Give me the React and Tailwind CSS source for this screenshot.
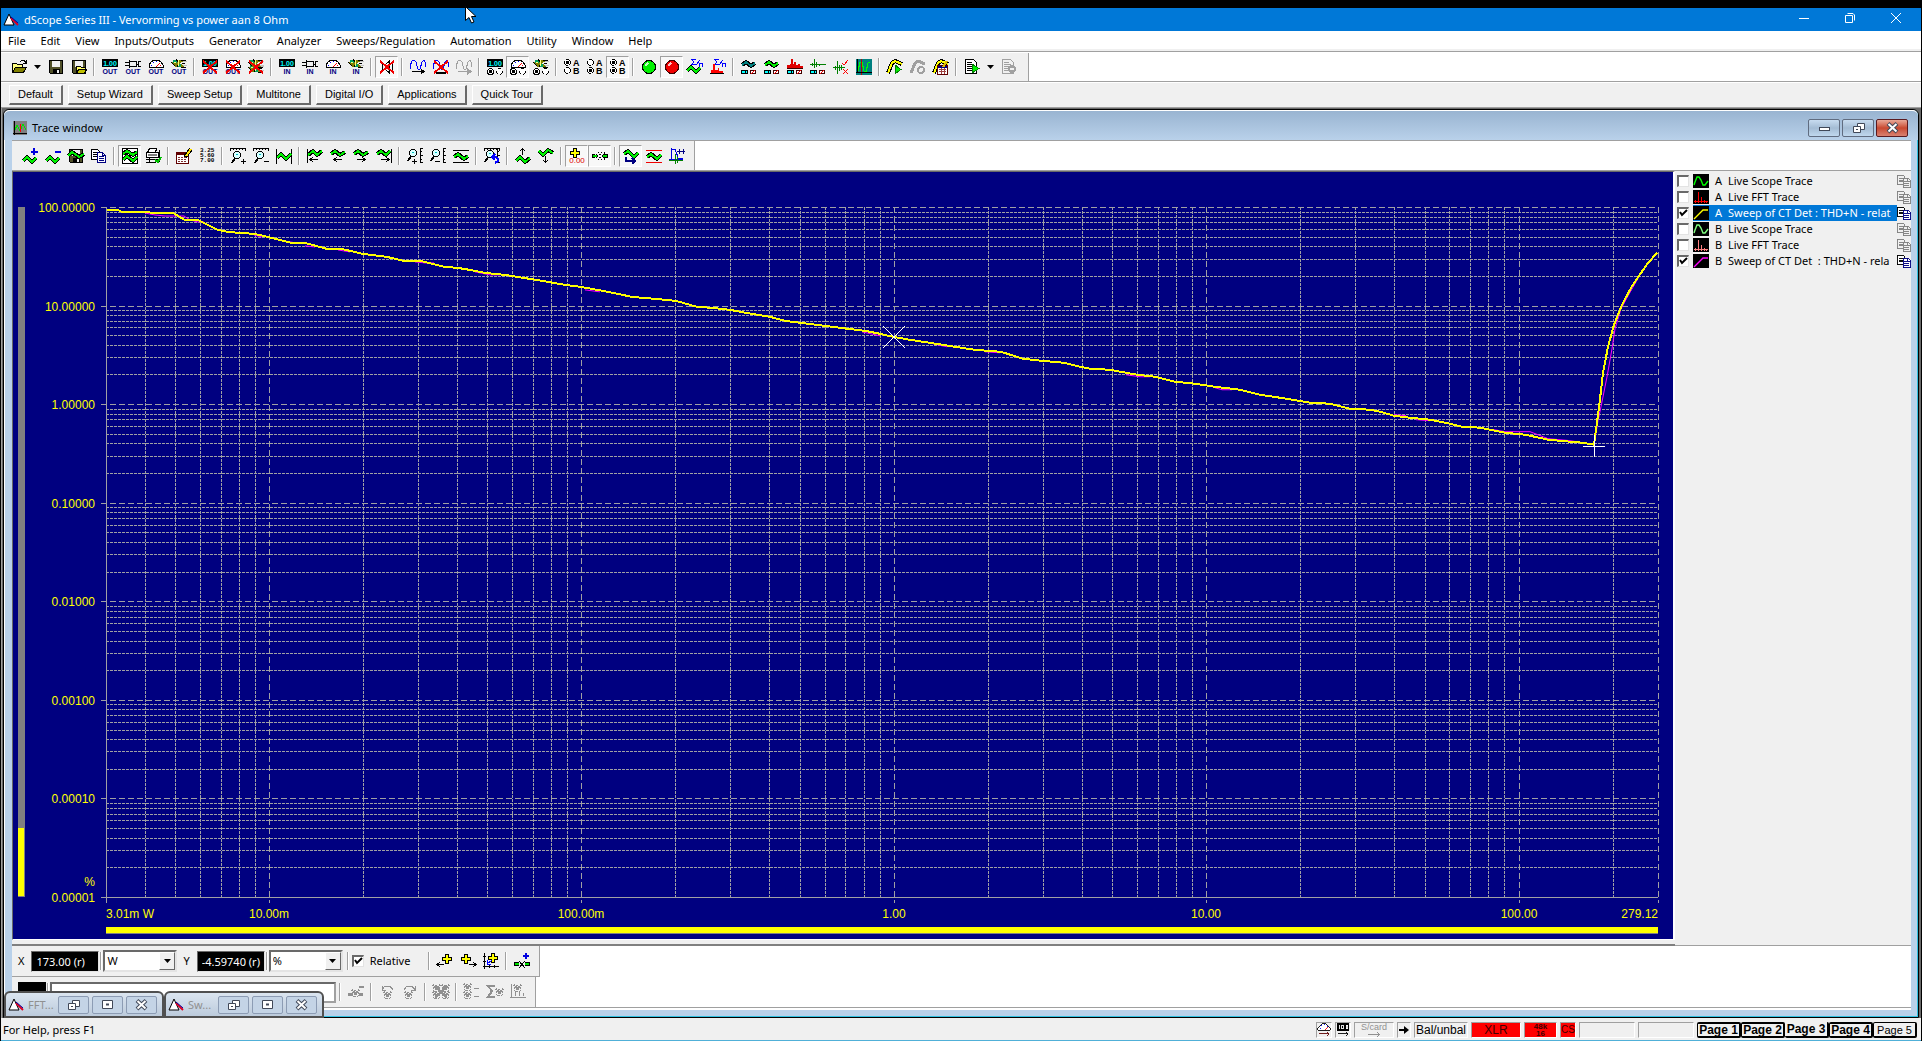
import React, { useEffect, useRef, useState } from 'react';

/* ---------- icon parts ---------- */

const Wave = ({ d = 'M1 10 L5 6 L11 11 L15 7', color = '#00f000' }) => (
  <>
    <path d={d} fill="none" stroke="#000" strokeWidth="4" />
    <path d={d} fill="none" stroke={color} strokeWidth="2" />
  </>
);

const Caption = ({ children }) => (
  <text x="8" y="15" fontSize="7" fontWeight="bold" textAnchor="middle" fill="#000080">{children}</text>
);

const Lcd = () => (
  <>
    <rect x="0" y="0" width="16" height="8" fill="#000" />
    <text x="8" y="7" fontSize="7" fontWeight="bold" textAnchor="middle" fill="#00ffff">1.00</text>
  </>
);

const Plug = () => (
  <path d="M0 3.5h4M0 6.5h4M4.5 1v8M4.5 2.5h7v5h-7M11.5 5h2M13.5 2.5h2.5M13.5 7.5h2.5M13.5 2v6" fill="none" stroke="#000" />
);

const Meter = () => (
  <>
    <path d="M1 8.5 V6 L3 3 L6 1 H10 L13 3 L15 6 V8.5 Z" fill="#fff" stroke="#000" />
    <path d="M3 6h1M5 3h1M8 2h1M11 4h1" stroke="#00f" />
    <path d="M8 8 L12 4" stroke="#f00" />
    <path d="M12 6h1" stroke="#f00" />
  </>
);

const Tiger = () => (
  <>
    <path d="M0 4 L3 1 H13 V3 H10 L9 5 L13 6 V8 H4 Z" fill="#808000" />
    <path d="M2 1 h4 v3 h-4z M7 5h3v3h-3z" fill="#00a060" />
    <path d="M5 0 L8 4 L6 8 M0 3 L4 7 M10 1 h5 M11 4 h3 M10 8 h5" fill="none" stroke="#000" />
    <path d="M7 1 v6 M3 3 h2" stroke="#ffff80" />
    <path d="M12 2.5h4M12 6h4" stroke="#c0c0c0" />
  </>
);

const Cross = () => (
  <path d="M1 2 L15 14 M15 2 L1 14" fill="none" stroke="#f00000" strokeWidth="2" />
);

const Radios = () => (
  <>
    <circle cx="3.5" cy="12.5" r="3" fill="#fff" stroke="#000" />
    <circle cx="12.5" cy="12.5" r="3" fill="#fff" stroke="#000" strokeDasharray="4 2" />
    <rect x="2" y="11" width="3" height="3" />
  </>
);

const Pads = () => (
  <>
    <rect x="0.5" y="11.5" width="6" height="3" fill="#00ffff" stroke="#000" />
    <path d="M4.5 11v4" stroke="#000" />
    <rect x="9.5" y="11.5" width="5" height="3" fill="#fff" stroke="#400000" />
    <path d="M10 15 L14 11" stroke="#f00" />
  </>
);

const Ab = ({ a, b }) => (
  <>
    <circle cx="3.5" cy="3.5" r="3" fill="#fff" stroke="#000" strokeDasharray="3 1" />
    <circle cx="3.5" cy="11.5" r="3" fill="#fff" stroke="#000" strokeDasharray="3 1" />
    {a && <rect x="2" y="2" width="3" height="3" />}
    {b && <rect x="2" y="10" width="3" height="3" />}
    <text x="9" y="7" fontSize="9" fontWeight="bold">A</text>
    <text x="9" y="15" fontSize="9" fontWeight="bold">B</text>
  </>
);

const Floppy = () => (
  <>
    <path d="M1.5 1.5h13v13h-12l-1-1z" fill="#505028" stroke="#000" />
    <rect x="4" y="2" width="8" height="6" fill="#f0f0f0" />
    <rect x="5" y="10" width="7" height="5" fill="#000" />
    <rect x="9" y="11" width="2" height="3" fill="#f0f0f0" />
  </>
);

const Lens = ({ x = 6, y = 6 }) => (
  <>
    <circle cx={x} cy={y} r="3.5" fill="#d8ffff" stroke="#000" />
    <path d={`M${x - 2} ${y + 3} L${x - 5} ${y + 8}`} stroke="#000" strokeWidth="2" />
    <path d={`M${x - 1} ${y - 1}h2`} stroke="#00c0c0" />
  </>
);

const Ruler = () => <path d="M0 .5h16M.5 0v3M3.5 0v2M6.5 0v2M9.5 0v2M12.5 0v2M15.5 0v3" stroke="#000" fill="none" />;
const SideRuler = () => <path d="M13.5 0v15M13 .5h3M13 3.5h2M13 7.5h3M13 11.5h2M13 14.5h3" stroke="#000" fill="none" />;
const Plus = ({ x = 6, y = 6 }) => (
  <>
    <path d={`M${x} ${y - 5}v10M${x - 5} ${y}h10`} stroke="#000" strokeWidth="4" />
    <path d={`M${x} ${y - 4}v8M${x - 4} ${y}h8`} stroke="#ffff00" strokeWidth="2" />
  </>
);
const Copy = ({ ink = '#000', back = '#000080', bg = '#fff' }) => (
  <>
    <path d="M.5 1.5h6l2 2v8h-8z" fill={bg} stroke={ink} />
    <path d="M2 4.5h4M2 6.5h5M2 8.5h5" stroke={ink} />
    <path d="M6.5 4.5h5l3 3v7h-8z" fill={bg} stroke={back} />
    <path d="M8 8.5h5M8 10.5h5M8 12.5h5M11.5 4v3.5h3" stroke={back} fill="none" />
  </>
);
const Hatch = ({ x = 0, y = 5, color = '#909090' }) => (
  <path d={`M${x} ${y} l7 7 M${x + 7} ${y} l-7 7 M${x + 3} ${y} v7 M${x} ${y + 3} h7`} stroke={color} fill="none" strokeDasharray="1 1" strokeWidth="2" />
);

const icons = {
  open: (
    <>
      <path d="M1.5 13.5V4.5h4l1 1h5v3" fill="#ffff80" stroke="#000" />
      <path d="M1.5 13.5l3-5h11l-3 5z" fill="#808000" stroke="#000" />
      <path d="M9 2.5l2-1h2l2 2M15 1v3h-3" fill="none" stroke="#000" />
    </>
  ),
  save: <Floppy />,
  saveAs: (
    <>
      <Floppy />
      <path d="M5.5 14.5V7.5h4l1 1h4v6z" fill="#ffff60" stroke="#000" />
      <path d="M5.5 14.5l2-4h8l-2 4z" fill="#c0c000" stroke="#000" />
    </>
  ),
  lcdOut: <><Lcd /><Caption>OUT</Caption></>,
  plugOut: <><Plug /><Caption>OUT</Caption></>,
  meterOut: <><Meter /><Caption>OUT</Caption></>,
  tigerOut: <><Tiger /><Caption>OUT</Caption></>,
  lcdOff: <><Lcd /><Caption>OUT</Caption><Cross /></>,
  meterOff: <><Meter /><Caption>OUT</Caption><Cross /></>,
  tigerOff: (
    <>
      <g transform="translate(0 5)"><Tiger /></g>
      <Tiger /><Cross />
    </>
  ),
  lcdIn: <><Lcd /><Caption>IN</Caption></>,
  plugIn: <><Plug /><Caption>IN</Caption></>,
  meterIn: <><Meter /><Caption>IN</Caption></>,
  tigerIn: <><Tiger /><Caption>IN</Caption></>,
  mute: (
    <>
      <path d="M3.5 5.5h3l4-3.5v12l-4-3.5h-3z" fill="#f0f0f0" stroke="#000" />
      <path d="M13 4v8" stroke="#000" />
      <Cross />
    </>
  ),
  genOn: (
    <>
      <path d="M0 10V7L2 2L4 1L6 3L8 10L10 10L12 3L14 1L15 3V8" fill="none" stroke="#0000ff" />
      <path d="M2 12.5h11M11 10l3 2.5l-3 2.5z" stroke="#000" />
    </>
  ),
  genOff: (
    <>
      <path d="M0 10V7L2 2L4 1L6 3L8 10L10 10L12 3L14 1L15 3V8" fill="none" stroke="#0000ff" />
      <path d="M3 13.5h10" stroke="#000" strokeWidth="2" />
      <Cross />
    </>
  ),
  genGrey: (
    <g stroke="#a0a0a0" fill="none">
      <path d="M0 10V7L2 2L4 1L6 3L8 10L10 10L12 3L14 1L15 3V8" />
      <path d="M2 12.5h11" /><path d="M11 9l4 3.5l-4 3.5z" fill="#a0a0a0" />
    </g>
  ),
  lcdSel: <><Lcd /><Radios /></>,
  meterSel: <><Meter /><Radios /></>,
  tigerSel: <><Tiger /><Radios /></>,
  abA: <Ab a />,
  abB: <Ab b />,
  abBoth: <Ab a b />,
  go: (
    <>
      <circle cx="8" cy="8" r="6.5" fill="#00f000" stroke="#000" />
      <path d="M4 7 L7 4" stroke="#c0ffc0" strokeWidth="2" />
    </>
  ),
  stop: (
    <>
      <circle cx="8" cy="8" r="6.5" fill="#f00000" stroke="#400000" />
      <path d="M4 7 L7 4" stroke="#ffc0c0" strokeWidth="2" />
    </>
  ),
  sumWave: (
    <>
      <path d="M9 .5H4.5L7 3L4.5 5.5H9M9 6L13 1M12.5 8V4.5h3V8" fill="none" stroke="#0000ff" />
      <Wave d="M0 12 L4 8 L9 13 L13 9" />
    </>
  ),
  sumFft: (
    <>
      <path d="M9 .5H4.5L7 3L4.5 5.5H9M9 6L13 1M12.5 8V4.5h3V8" fill="none" stroke="#0000ff" />
      <path d="M1 13V11H3V5H5V11H8V9H9V12H13V14H0" fill="#f00" />
      <path d="M0 14.5h14" stroke="#000" />
    </>
  ),
  scopeA: <><Wave d="M1 6 L5 3 L10 7 L14 4" color="#008080" /><Pads /></>,
  scopeB: <><Wave d="M1 6 L5 3 L10 7 L14 4" /><Pads /></>,
  fft: <><path d="M0 8V6H3V5H4V0H6V5H7V3H9V6H11V5H13V7H16V9H0z" fill="#e00000" /><path d="M0 9.5h16" stroke="#400000" /><Pads /></>,
  impulse: <><path d="M0 5.5h16M4.5 0v9M6.5 3v5M2.5 4v3M9.5 5v2" stroke="#008000" /><Pads /></>,
  limits: (
    <>
      <path d="M0 8.5h12M4.5 2v13M6.5 6v6M2.5 7v4M8.5 6v5" stroke="#008000" />
      <path d="M9 4l2 2l4-5M10 10l5 5M15 10l-5 5" stroke="#f00" fill="none" />
    </>
  ),
  scope: (
    <>
      <rect width="16" height="16" fill="#008080" />
      <path d="M2 12L4 3L6 3L8 12L10 13L12 4L14 3" fill="none" stroke="#00ff00" />
      <path d="M5.5 0v16" stroke="#c00000" /><path d="M1.5 0v14M0 13.5h16" stroke="#000" />
    </>
  ),
  sweepGo: (
    <>
      <path d="M1 14 L5 4 L8 2 L15 5" fill="none" stroke="#000" strokeWidth="4" />
      <path d="M1 14 L5 4 L8 2 L15 5" fill="none" stroke="#ffff00" strokeWidth="2" />
      <path d="M8 6l6 4.5l-6 4.5z" fill="#00f000" stroke="#008000" />
    </>
  ),
  sweepStop: (
    <>
      <path d="M1 14 L5 4 L8 2 L15 5" fill="none" stroke="#a0a0a0" strokeWidth="3" />
      <circle cx="11" cy="11" r="3" fill="#f0f0f0" stroke="#a0a0a0" strokeWidth="2" />
    </>
  ),
  sweepTable: (
    <>
      <path d="M1 14 L5 4 L8 2 L15 5" fill="none" stroke="#000" strokeWidth="4" />
      <path d="M1 14 L5 4 L8 2 L15 5" fill="none" stroke="#ffff00" strokeWidth="2" />
      <rect x="4.5" y="6.5" width="10" height="9" fill="#fff" stroke="#600000" />
      <path d="M5 8h9" stroke="#000080" strokeWidth="2" />
      <path d="M6 10.5h7M6 12.5h7M8.5 9v6M11.5 9v6" stroke="#a04040" />
      <path d="M14 2 L10 8" stroke="#e0c000" strokeWidth="2" />
    </>
  ),
  scriptGo: (
    <>
      <path d="M1.5 .5h8l3 3v11h-11z" fill="#fff" stroke="#000" />
      <path d="M3 3.5h5M3 5.5h7M3 7.5h5M3 9.5h5M3 11.5h5" stroke="#000" />
      <path d="M8 5l7 4.5l-7 4.5z" fill="#00f000" stroke="#008000" />
    </>
  ),
  scriptStop: (
    <>
      <path d="M1.5 .5h8l3 3v11h-11z" fill="#f0f0f0" stroke="#a0a0a0" />
      <path d="M3 3.5h5M3 5.5h7M3 7.5h5M3 9.5h5M3 11.5h5" stroke="#a0a0a0" />
      <circle cx="11" cy="10" r="4" fill="#a0a0a0" /><path d="M9 10h4" stroke="#f0f0f0" strokeWidth="2" />
    </>
  ),

  /* trace window */
  addTrace: <><Wave d="M1 13 L5 9 L10 14 L14 10" /><path d="M12 0v7M9 3.5h7" stroke="#0000e0" strokeWidth="2" /></>,
  delTrace: <><Wave d="M1 13 L5 9 L10 14 L14 10" /><path d="M10 3.5h6" stroke="#0000e0" strokeWidth="2" /></>,
  saveTrace: <><Floppy /><Wave d="M0 8 L4 4 L11 9 L16 6" /></>,
  copy: <Copy />,
  traces: (
    <>
      <rect x=".5" y=".5" width="15" height="15" fill="#fff" stroke="#000" />
      <Wave d="M1 6 L5 3 L11 7 L15 4" /><Wave d="M1 12 L5 8 L11 13 L15 9" />
    </>
  ),
  print: (
    <>
      <path d="M2.5 4.5l2-4h7l-1 4M1.5 4.5h12v5h-12z" fill="#fff" stroke="#000" />
      <path d="M3 7h9" stroke="#808080" strokeWidth="2" />
      <path d="M1 11.5h13M4.5 9v6M1 14.5h10M14.5 2v12" stroke="#000" />
      <path d="M10 12 L13 14 L16 9" stroke="#00c000" strokeWidth="2" fill="none" />
    </>
  ),
  table: (
    <>
      <rect x=".5" y="4.5" width="12" height="11" fill="#fff" stroke="#600000" />
      <path d="M1 6h11" stroke="#600000" strokeWidth="2" />
      <path d="M2 9.5h9M2 11.5h9M2 13.5h9" stroke="#803030" strokeDasharray="2 1" />
      <path d="M15 1 L9 9" stroke="#000" strokeWidth="4" /><path d="M15 1 L10 8" stroke="#ffe000" strokeWidth="2" />
    </>
  ),
  numbers: (
    <g fontSize="6" fontFamily="Liberation Mono" fontWeight="bold">
      <text x="1" y="4">3.25</text><text x="1" y="9">5.60</text><text x="1" y="14">7.00</text>
    </g>
  ),
  zoomInX: <><Ruler /><Lens x={7} y={7} /><path d="M11 13.5h5M13.5 11v5" stroke="#000" /></>,
  zoomOutX: <><Ruler /><Lens x={7} y={7} /><path d="M11 13.5h5" stroke="#000" /></>,
  fitX: <><path d="M.5 1v15M15.5 1v15" stroke="#000" /><Wave d="M1 10 L5 6 L10 11 L15 6" /></>,
  toStart: <><path d="M.5 1v14" stroke="#000" /><Wave d="M1 7 L6 3 L10 7 L15 3" /><path d="M3 11.5h8M6 9l-3 2.5l3 2.5" stroke="#000" fill="none" /></>,
  left: <><Wave d="M1 6 L5 3 L10 7 L15 4" /><path d="M4 11.5h8M7 9l-3 2.5l3 2.5" stroke="#000" fill="none" /></>,
  right: <><Wave d="M1 6 L5 3 L10 7 L15 4" /><path d="M4 11.5h8M9 9l3 2.5l-3 2.5" stroke="#000" fill="none" /></>,
  toEnd: <><path d="M15.5 1v14" stroke="#000" /><Wave d="M1 6 L5 3 L10 7 L14 3" /><path d="M5 11.5h8M10 9l3 2.5l-3 2.5" stroke="#000" fill="none" /></>,
  zoomInY: <><SideRuler /><Lens x={6} y={5} /><path d="M5 13.5h5M7.5 11v5" stroke="#000" /></>,
  zoomOutY: <><SideRuler /><Lens x={6} y={5} /><path d="M5 13.5h5" stroke="#000" /></>,
  fitY: <><path d="M0 2.5h16M0 14.5h16" stroke="#000" /><Wave d="M1 9 L5 6 L11 11 L15 8" /></>,
  zoomUndo: <><Ruler /><SideRuler /><Lens x={6} y={6} /><path d="M8 9h4l2 2v2l-3 2M11 6l-3 3l3 3" stroke="#0000ff" strokeWidth="2" fill="none" /></>,
  up: <><Wave d="M1 13 L5 9 L10 14 L15 10" /><path d="M7.5 0v7M5 3l2.5-2.5l2.5 2.5" stroke="#000" fill="none" /></>,
  down: <><Wave d="M1 3 L5 7 L10 2 L15 5" /><path d="M7.5 8v7M5 12l2.5 2.5l2.5-2.5" stroke="#000" fill="none" /></>,
  cursorVal: (
    <>
      <Plus x={6} y={5} />
      <text x="8" y="15" fontSize="8" textAnchor="middle" fill="#e00000">0.00</text>
    </>
  ),
  cursorJoin: (
    <>
      <path d="M0 8h3M16 8h-3" stroke="#000" strokeWidth="4" /><path d="M3.5 4v8L6 8zM12.5 4v8L10 8z" fill="#000" />
      <path d="M1 8h4M15 8h-4" stroke="#00e000" strokeWidth="2" />
      <path d="M6 4l4 8M10 4l-4 8" stroke="#000" strokeDasharray="1 1" />
    </>
  ),
  track: <><Wave d="M1 6 L5 3 L11 9 L15 5" /><path d="M3 9v4h8M9 10l3 3l-3 3" stroke="#000080" strokeWidth="2" fill="none" /></>,
  bounds: <><path d="M0 2h16M0 14h16" stroke="#f00000" /><Wave d="M1 9 L5 6 L11 11 L15 7" /></>,
  shift: (
    <>
      <path d="M2.5 0v13M0 11.5h14M3 1.5h3l2 5v4h6" stroke="#0000e0" fill="none" />
      <path d="M0 12.5h14M6.5 6v10M8.5 9v6" stroke="#008000" />
      <path d="M8 3.5h8M10 1v5M14 1v5" stroke="#000080" />
    </>
  ),

  /* cursor bar */
  plusLeft: <><Plus x={10} y={6} /><path d="M0 11.5h7M3 9l-3 2.5l3 2.5" stroke="#000" fill="none" /></>,
  plusRight: <><Plus x={6} y={6} /><path d="M9 11.5h7M13 9l3 2.5l-3 2.5" stroke="#000" fill="none" /></>,
  plusOrigin: (
    <>
      <path d="M1.5 0v16M0 13.5h16M0 3.5h3M0 8.5h3M6.5 12v3M11.5 12v3" stroke="#000" />
      <Plus x={10} y={5} /><path d="M9 7 L4 11M4 7v4h4" stroke="#0000ff" fill="none" />
    </>
  ),
  joinPlus: (
    <>
      <path d="M0 11h5M16 11h-5" stroke="#000" strokeWidth="4" /><path d="M1 11h4M15 11h-4" stroke="#00e000" strokeWidth="2" />
      <path d="M5 8l6 7M11 8l-6 7" stroke="#000" /><path d="M12 0v6M9 3h6" stroke="#0000e0" strokeWidth="2" />
    </>
  ),
  greyJoin: <><path d="M0 10h5M11 10h4" stroke="#909090" strokeWidth="3" /><Hatch x={4} y={6} /><path d="M11 3h5" stroke="#909090" strokeWidth="2" /></>,
  greyUndo: <><Hatch x={5} y={8} /><path d="M3 2v4h4M3 6L6 2H11L14 6" stroke="#909090" fill="none" /></>,
  greyRedo: <><Hatch x={3} y={8} /><path d="M13 2v4h-4M13 6L10 2H5L2 6" stroke="#909090" fill="none" /></>,
  greyDelete: <><Hatch x={0} y={1} /><Hatch x={9} y={1} /><Hatch x={0} y={8} /><Hatch x={9} y={8} /><path d="M2 2l12 12M14 2L2 14" stroke="#909090" strokeWidth="2" /></>,
  greyList: <><Hatch x={0} y={0} /><Hatch x={0} y={8} /><path d="M10 4.5h5M10 12.5h5" stroke="#909090" /></>,
  greySum: <><path d="M8 2H1l4 5l-4 6h7" stroke="#909090" strokeWidth="2" fill="none" /><Hatch x={9} y={5} /></>,
  greyPlot: <><path d="M1.5 0v14M0 13.5h16M5.5 12v-4M9.5 12v-5M13.5 12v-3" stroke="#909090" /><Hatch x={4} y={1} /></>,
};

const traceIcons = {
  scope: 'M1 11L2 8L4 3H6L8 6L10 11H12L15 7',
  fft: 'M1 11.5h14M2.5 13v-3M5.5 13V2M8.5 13V7M11.5 13v-3M13.5 13v-2',
  sweep: 'M1 13L8 6L10 4H15',
};

const Icon = ({ name }) => (
  <svg viewBox="0 0 16 16" shapeRendering="crispEdges" aria-hidden="true" className="h-4 w-4 shrink-0 overflow-visible font-['Liberation_Sans',sans-serif]">
    {icons[name]}
  </svg>
);

const AppLogo = () => (
  <svg viewBox="0 0 16 16" aria-hidden="true" className="h-4 w-4 shrink-0">
    <path d="M6 2 L11 13 H1 Z" fill="#fff" stroke="#000" />
    <path d="M8 6 L15 13" stroke="#e00020" strokeWidth="2" />
    <path d="M8 5 L15 11" stroke="#0000a0" />
  </svg>
);

/* ---------- toolbars ---------- */

// '|' is a separator, 'v' a drop arrow, a leading '*' a pressed button
const mainTools = [
  'open', 'v', 'save', 'saveAs', '|', 'lcdOut', 'plugOut', 'meterOut', 'tigerOut', '|',
  'lcdOff', 'meterOff', 'tigerOff', '|', 'lcdIn', 'plugIn', 'meterIn', 'tigerIn', '|', '*mute', '|',
  'genOn', 'genOff', 'genGrey', '|', 'lcdSel', '*meterSel', 'tigerSel', '|', 'abA', 'abB', '*abBoth', '|',
  'go', '*stop', 'sumWave', 'sumFft', '|', 'scopeA', 'scopeB', 'fft', 'impulse', 'limits', 'scope', '|',
  'sweepGo', 'sweepStop', 'sweepTable', '|', 'scriptGo', 'v', 'scriptStop',
];

const traceTools = [
  'addTrace', 'delTrace', 'saveTrace', 'copy', '|', '*traces', 'print', '|', 'table', 'numbers', '|',
  'zoomInX', 'zoomOutX', 'fitX', '|', 'toStart', 'left', 'right', 'toEnd', '|', 'zoomInY', 'zoomOutY', 'fitY', '|',
  'zoomUndo', '|', 'up', 'down', '|', '*cursorVal', '*cursorJoin', '|', '*track', 'bounds', 'shift',
];

const Tools = ({ items }) => (
  <>
    {items.map((item, i) => {
      if (item === '|') return <span key={i} className="mx-[3px] h-[18px] w-0.5 shrink-0 border-l border-[#a0a0a0] bg-white" />;
      if (item === 'v') {
        return (
          <button key={i} aria-label="More" className="flex h-[22px] w-3.5 shrink-0 items-center justify-center">
            <svg viewBox="0 0 7 4" className="h-1 w-[7px]"><path d="M0 0h7L3.5 4z" /></svg>
          </button>
        );
      }
      const pressed = item[0] === '*';
      const name = pressed ? item.slice(1) : item;
      return (
        <button
          key={i}
          aria-label={name}
          className={`flex h-[22px] w-[23px] shrink-0 items-center justify-center ${pressed ? 'border border-[#a0a0a0] border-r-white border-b-white bg-[#f8f8f8]' : ''}`}
        >
          <Icon name={name} />
        </button>
      );
    })}
  </>
);

const menus = ['File', 'Edit', 'View', 'Inputs/Outputs', 'Generator', 'Analyzer', 'Sweeps/Regulation', 'Automation', 'Utility', 'Window', 'Help'];
const shortcuts = ['Default', 'Setup Wizard', 'Sweep Setup', 'Multitone', 'Digital I/O', 'Applications', 'Quick Tour'];

/* ---------- chart ---------- */

// trace points inside a 1552 x 691 plot, scaled to the real size
const PLOT_W = 1552;
const PLOT_H = 691;
const traceA = 'M1 3L12 3L16 5L39 5L49 6L67 6L79 13L92 13L112 23L122 25L149 27L162 30L186 36L199 36L221 42L236 42L257 47L266 48L281 50L294 53L298 54L315 54L339 60L352 61L364 63L379 66L399 68L424 72L442 75L459 78L475 80L502 85L526 90L549 92L570 94L591 100L606 101L624 103L640 106L664 110L679 114L694 116L719 119L742 122L759 124L774 127L787 130L804 133L824 136L849 140L869 143L895 145L917 152L936 154L958 156L974 160L984 162L1004 163L1031 168L1049 170L1069 175L1089 177L1109 180L1134 183L1154 188L1174 191L1204 196L1224 197L1244 202L1264 203L1274 205L1288 209L1304 211L1324 213L1344 217L1356 220L1374 221L1399 226L1419 228L1442 233L1464 235L1476 236L1488 238L1490 223L1493 201L1497 166L1502 140L1508 118L1516 98L1525 81L1533 69L1542 56L1551 46';
const traceB = 'M39 6L49 8L59 9L70 9L78 9L84 13L92 15L98 15M148 28L156 30M178 34L190 36M199 39L209 40M232 43L244 45M309 55L319 56L328 56M369 65L384 68L394 68M479 83L494 85M756 125L774 129M827 137L841 140M879 145L894 146M1020 168L1034 170L1044 170M1109 181L1116 183L1126 183M1288 208L1300 209M1310 213L1324 214M1388 223L1399 225L1424 225L1442 232L1464 234L1488 238L1492 214L1495 200L1501 170L1506 142L1509 122L1515 102L1522 89L1534 68';

const yLabels = ['100.00000', '10.00000', '1.00000', '0.10000', '0.01000', '0.00100', '0.00010', '0.00001'];
const xLabels = [[-2, '10.00m'], [-1, '100.00m'], [0, '1.00'], [1, '10.00'], [2, '100.00']];
const X_MIN = Math.log10(0.00301);
const X_MAX = Math.log10(279.12);

const Chart = () => {
  const ref = useRef(null);
  const [size, setSize] = useState({ w: 1660, h: 768 });

  useEffect(() => {
    const update = () => setSize({ w: ref.current.clientWidth, h: ref.current.clientHeight });
    update();
    const observer = new ResizeObserver(update);
    observer.observe(ref.current);
    return () => observer.disconnect();
  }, []);

  const left = 93;
  const top = 35;
  const right = size.w - 15;
  const bottom = size.h - 42;
  const xAt = (log) => Math.round(left + ((log - X_MIN) / (X_MAX - X_MIN)) * (right - left));
  const yAt = (decade) => Math.round(top + (decade / 7) * (bottom - top));

  const vertical = [];
  const horizontal = [];
  for (let exp = -3; exp <= 2; exp++) {
    for (let n = 1; n < 10; n++) {
      const log = exp + Math.log10(n);
      if (log > X_MIN && log < X_MAX) vertical.push({ x: xAt(log), major: n === 1 });
    }
  }
  for (let d = 0; d < 7; d++) {
    for (let n = 1; n < 10; n++) horizontal.push({ y: yAt(d + (n === 1 ? 0 : 1 - Math.log10(n))), major: n === 1 });
  }
  const kx = (right - left) / PLOT_W;
  const ky = (bottom - top) / PLOT_H;
  const cursorX = Math.round(left + 1488 * kx);
  const cursorY = Math.round(top + 239 * ky);
  const refX = Math.round(left + 788 * kx);
  const refY = Math.round(top + 130 * ky);

  return (
    <div ref={ref} className="relative min-h-0 min-w-0 flex-1 overflow-hidden bg-[#000080]">
      <svg width={size.w} height={size.h} className="absolute inset-0 font-['Liberation_Sans',sans-serif] text-[12px]" fill="#ffff00">
        <g shapeRendering="crispEdges" stroke="#a0a0a4">
          {vertical.map(({ x, major }) => (
            <line key={x} x1={x + 0.5} x2={x + 0.5} y1={top} y2={major ? bottom + 6 : bottom} strokeDasharray={major ? '6 3' : '3 1'} />
          ))}
          {horizontal.map(({ y, major }) => (
            <line key={y} x1={major ? left - 5 : left} x2={right} y1={y + 0.5} y2={y + 0.5} strokeDasharray={major ? '6 3' : '3 1'} />
          ))}
          <line x1={right + 0.5} x2={right + 0.5} y1={top} y2={bottom + 6} strokeDasharray="6 3" />
          <path d={`M${left + 0.5} ${top}V${bottom + 6}M${left - 5} ${bottom + 0.5}H${right}`} fill="none" />
        </g>

        {yLabels.map((label, i) => (
          <text key={label} x={left - 11} y={yAt(i) + 5} textAnchor="end">{label}</text>
        ))}
        <text x={left - 11} y={bottom - 11} textAnchor="end">%</text>
        <text x={left} y={bottom + 21}>3.01m W</text>
        {xLabels.map(([log, label]) => (
          <text key={label} x={xAt(log)} y={bottom + 21} textAnchor="middle">{label}</text>
        ))}
        <text x={right} y={bottom + 21} textAnchor="end">279.12</text>

        <g shapeRendering="crispEdges">
          <rect x="5" y={top} width="7" height={bottom - top} fill="#808080" />
          <rect x="5" y={top + (bottom - top) * 0.9} width="6" height={(bottom - top) * 0.1 - 1} />
          <rect x={left} y={bottom + 30} width={right - left} height="6" />
          <rect x={left} y={bottom + 36} width={right - left} height="1" fill="#808080" />
          <g transform={`translate(${left} ${top}) scale(${kx} ${ky})`} fill="none">
            <path d={traceB} stroke="#ff00ff" strokeWidth="1" />
            <path d={traceA} stroke="#ffff00" strokeWidth="2" />
          </g>
          <path d={`M${cursorX - 11} ${cursorY + 0.5}h22M${cursorX + 0.5} ${cursorY - 11}v22`} stroke="#fff" />
        </g>
        <path d={`M${refX - 11} ${refY - 11}l22 22M${refX + 11} ${refY - 11}l-22 22`} stroke="#fff" />
      </svg>
    </div>
  );
};

/* ---------- trace list ---------- */

const traces = [
  { ch: 'A', label: 'Live Scope Trace', icon: 'scope', color: 'stroke-[#00ff00]' },
  { ch: 'A', label: 'Live FFT Trace', icon: 'fft', color: 'stroke-[#ff0000]' },
  { ch: 'A', label: 'Sweep of CT Det : THD+N - relat', icon: 'sweep', color: 'stroke-[#ffff00]', on: true, selected: true },
  { ch: 'B', label: 'Live Scope Trace', icon: 'scope', color: 'stroke-[#80ff80]' },
  { ch: 'B', label: 'Live FFT Trace', icon: 'fft', color: 'stroke-[#ff8080]' },
  { ch: 'B', label: 'Sweep of CT Det  : THD+N - rela', icon: 'sweep', color: 'stroke-[#ff00ff]', on: true },
];

const CheckBox = ({ id, checked, label }) => (
  <span className="relative h-3 w-3 shrink-0">
    <input
      id={id}
      type="checkbox"
      defaultChecked={checked}
      aria-label={label}
      className="peer block h-3 w-3 appearance-none border border-[#e3e3e3] border-t-2 border-l-2 border-t-[#696969] border-l-[#696969] bg-white"
    />
    <svg viewBox="0 0 12 12" className="pointer-events-none absolute inset-0 hidden h-3 w-3 peer-checked:block">
      <path d="M3 5 L5 8 L10 3" fill="none" stroke="#000" strokeWidth="2" />
    </svg>
  </span>
);

const TraceList = () => (
  <ul className="w-[236px] shrink-0 bg-[#f0f0f0] pt-0.5 pl-0.5">
    {traces.map(({ ch, label, icon, color, on, selected }, i) => (
      <li key={i} className="flex h-4 items-center">
        <CheckBox checked={on} label={`Show ${ch} ${label}`} />
        <div className={`ml-1 flex h-4 min-w-0 flex-1 items-center ${selected ? 'bg-[#0078d7] text-white' : ''}`}>
          <svg viewBox="0 0 16 14" aria-hidden="true" className={`h-3.5 w-4 shrink-0 bg-black ${color}`}>
            <path d={traceIcons[icon]} fill="none" strokeWidth={icon === 'fft' ? 1 : 1.4} />
          </svg>
          <span className="ml-1.5 w-3 shrink-0 leading-4">{ch}</span>
          <span className="ml-px leading-4 whitespace-pre">{label}</span>
        </div>
        <button aria-label={`Copy ${ch} ${label}`} className="w-3.5 shrink-0">
          <svg viewBox="0 0 15 15" shapeRendering="crispEdges" className="h-3.5 w-3.5">
            {on ? <Copy /> : <Copy ink="#808080" back="#808080" bg="#f0f0f0" />}
          </svg>
        </button>
      </li>
    ))}
  </ul>
);

/* ---------- cursor bars ---------- */

const Bar = () => <span className="mx-px h-[18px] w-0.5 shrink-0 border-l border-[#a0a0a0] bg-white" />;

const Readout = ({ label, value }) => (
  <label className="flex items-center gap-[7px]">
    {label}
    <input
      readOnly
      value={value}
      className="h-[21px] w-[68px] border border-[#e3e3e3] border-t-[#696969] border-l-[#696969] bg-black pl-1 text-white"
    />
  </label>
);

const UnitSelect = ({ label, value }) => (
  <span className="relative h-[22px] w-[74px] shrink-0">
    <select aria-label={label} defaultValue={value} className="h-full w-full appearance-none border-2 border-[#e3e3e3] border-t-[#696969] border-l-[#696969] bg-white pl-0.5">
      <option>{value}</option>
    </select>
    <span className="pointer-events-none absolute top-0.5 right-0.5 flex h-[18px] w-4 items-center justify-center border border-white border-r-[#696969] border-b-[#696969] bg-[#f0f0f0]">
      <svg viewBox="0 0 7 4" className="h-1 w-[7px]"><path d="M0 0h7L3.5 4z" /></svg>
    </span>
  </span>
);

const CursorBars = () => (
  <div className="h-[62px] shrink-0 border-b border-[#a0a0a0] bg-white">
    <div className="flex h-[31px]">
      <div className="flex items-center border-r border-b border-[#a0a0a0] bg-[#f0f0f0] pr-1.5 pl-1.5">
        <Readout label="X" value="173.00 (r)" />
        <Bar />
        <UnitSelect label="X unit" value="W" />
        <span className="w-1.5" />
        <Readout label="Y" value="-4.59740 (r)" />
        <Bar />
        <UnitSelect label="Y unit" value="%" />
        <span className="w-[3px]" />
        <Bar />
        <span className="w-0.5" />
        <CheckBox id="relative" checked />
        <label htmlFor="relative" className="ml-1.5">Relative</label>
        <span className="w-[15px]" />
        <Tools items={['|', 'plusLeft', 'plusRight', 'plusOrigin', '|', 'joinPlus']} />
      </div>
    </div>
    <div className="flex h-[30px]">
      <div className="flex items-center border-r border-[#a0a0a0] bg-[#f0f0f0] pr-1.5 pl-1.5">
        <span className="h-[21px] w-7 bg-black" />
        <Bar />
        <input aria-label="Comment" className="h-[21px] w-[286px] border-2 border-[#696969] border-r-[#a0a0a0] border-b-[#a0a0a0] bg-white" />
        <Tools items={['|', 'greyJoin', '|', 'greyUndo', 'greyRedo', '|', 'greyDelete', '|', 'greyList', 'greySum', 'greyPlot']} />
      </div>
    </div>
  </div>
);

/* ---------- window buttons ---------- */

const glyphs = {
  minimize: <rect x="1.5" y="5.5" width="10" height="3" fill="#fff" stroke="#404858" />,
  restore: (
    <>
      <path d="M5.5 1.5h7v6h-7z" fill="#fff" stroke="#404858" />
      <path d="M1.5 4.5h7v6h-7z" fill="#fff" stroke="#404858" />
      <path d="M4 7.5h2" stroke="#404858" />
    </>
  ),
  maximize: <><path d="M1.5 1.5h10v8h-10z" fill="#fff" stroke="#404858" /><path d="M5 5.5h3" stroke="#404858" strokeWidth="2" /></>,
  close: (
    <>
      <path d="M2 1.5 L11 10 M11 1.5 L2 10" stroke="#404858" strokeWidth="4" />
      <path d="M2.5 2 L10.5 9.5 M10.5 2 L2.5 9.5" stroke="#fff" strokeWidth="2" />
    </>
  ),
};
const Glyph = ({ name }) => <svg viewBox="0 0 13 12" aria-hidden="true" className="h-3 w-[13px]">{glyphs[name]}</svg>;

const AeroButton = ({ name }) => (
  <button
    aria-label={name}
    className={`flex h-[18px] w-8 items-center justify-center rounded-xs border ${name === 'close'
      ? 'border-[#5a1a20] bg-linear-to-b from-[#e8a898] via-[#c84830] to-[#d88070]'
      : 'border-[#606c80] bg-linear-to-b from-[#c8dcf0] via-[#a4bcd4] to-[#c0d8ee]'}`}
  >
    <Glyph name={name} />
  </button>
);

const MinimizedWindow = ({ title }) => (
  <div className="flex h-[27px] w-40 items-center gap-[3px] rounded-t-md border-2 border-[#505050] bg-linear-to-b from-[#dbe5f0] to-[#bccbdc] pl-0.5">
    <AppLogo />
    <span className="w-7 shrink-0 pl-px text-[#909090]">{title}</span>
    {['restore', 'maximize', 'close'].map((name) => (
      <button key={name} aria-label={name} className="flex h-[18px] w-[31px] items-center justify-center rounded-xs border border-[#8c9cb4] bg-[#c4d4e6]">
        <Glyph name={name} />
      </button>
    ))}
  </div>
);

/* ---------- status bar ---------- */

const Cell = ({ className, children }) => (
  <div className={`flex h-4 items-center justify-center border border-white border-t-[#a0a0a0] border-l-[#a0a0a0] ${className}`}>
    {children}
  </div>
);

const StatusBar = () => (
  <footer className="flex h-[23px] shrink-0 items-center border-b border-[#50b0d8] bg-[#f0f0f0] pt-0.5 pr-1">
    <span className="flex-1 pl-0.5">For Help, press F1</span>
    <div className="flex items-center gap-[3px] font-['Liberation_Sans',sans-serif] text-[12px] leading-4">
      <Cell className="w-4">
        <svg viewBox="0 0 16 16" shapeRendering="crispEdges" className="h-3.5 w-3.5"><Meter /><path d="M2 12.5h12M11 10l3 2.5l-3 2.5" stroke="#600000" fill="none" /></svg>
      </Cell>
      <Cell className="w-4">
        <svg viewBox="0 0 16 16" shapeRendering="crispEdges" className="h-3.5 w-3.5">
          <rect x="1" width="14" height="9" /><path d="M3.5 2v5M6.5 2.5h2v4h-2zM11.5 2.5h2v4h-2z" stroke="#fff" fill="none" />
          <path d="M2 12.5h12M11 10l3 2.5l-3 2.5" stroke="#000" fill="none" />
        </svg>
      </Cell>
      <Cell className="w-10 flex-col text-[9px] leading-[9px] text-[#909090]">
        S/card
        <svg viewBox="0 0 12 5" shapeRendering="crispEdges" className="h-[5px] w-3 shrink-0"><path d="M0 2.5h11M9 0l2.5 2.5L9 5" stroke="#909090" fill="none" /></svg>
      </Cell>
      <Cell className="w-3.5">
        <svg viewBox="0 0 10 8" className="h-2 w-2.5"><path d="M0 3h5V0l5 4l-5 4V5H0z" /></svg>
      </Cell>
      <Cell className="w-[54px]">Bal/unbal</Cell>
      <Cell className="w-[50px] bg-[#ff0000] text-[#400000]">XLR</Cell>
      <Cell className="w-[33px] flex-col bg-[#ff0000] text-[8px] leading-[7px] font-bold text-[#400000]"><span>48k</span><span>16</span></Cell>
      <Cell className="w-4 bg-[#ff0000] text-[10px] text-[#400000]">CS</Cell>
      <Cell className="w-14" />
      <Cell className="w-14" />
      <nav className="flex">
        {[1, 2, 3, 4, 5].map((n) => (
          <button
            key={n}
            className={`h-4 w-11 rounded-xs border-r-2 border-b-2 border-black text-center whitespace-nowrap ${n === 5
              ? 'border-t border-l text-[11px] leading-3'
              : n === 3 ? 'font-bold leading-[14px]' : 'border-t-2 border-l font-bold leading-3'}`}
          >
            Page {n}
          </button>
        ))}
      </nav>
    </div>
  </footer>
);

/* ---------- app ---------- */

const App = () => (
  <div className="relative flex h-screen flex-col overflow-hidden bg-black px-px pt-2 font-['Noto_Sans','Open_Sans',sans-serif] text-[11px] leading-4 text-black">
    <header className="flex h-[23px] shrink-0 items-center bg-[#0078d7] pr-0.5 pl-0.5 text-white">
      <AppLogo />
      <h1 className="flex-1 pl-[5px]">dScope Series III - Vervorming vs power aan 8 Ohm</h1>
      <div className="flex items-center pb-1">
        <button aria-label="Minimize" className="flex w-[46px] justify-center"><svg viewBox="0 0 10 10" className="h-2.5 w-2.5"><path d="M0 5.5h10" stroke="#fff" /></svg></button>
        <button aria-label="Restore" className="flex w-[46px] justify-center">
          <svg viewBox="0 0 10 10" className="h-2.5 w-2.5"><path d="M.5 2.5h7v7h-7zM2.5 .5h5.5l1.5 1.5v5.5" fill="none" stroke="#fff" /></svg>
        </button>
        <button aria-label="Close" className="flex w-[46px] justify-center"><svg viewBox="0 0 10 10" className="h-2.5 w-2.5"><path d="M0 0l10 10M10 0L0 10" stroke="#fff" /></svg></button>
      </div>
    </header>

    <nav className="flex h-5 shrink-0 items-center gap-[15px] border-b-2 border-[#f0f0f0] bg-white pt-0.5 pl-[7px]">
      {menus.map((menu) => <button key={menu}>{menu}</button>)}
    </nav>

    <div className="flex h-[30px] shrink-0 border-t border-[#a0a0a0] bg-white pt-px">
      <div className="flex items-center border-r border-[#a0a0a0] bg-[#f0f0f0] pr-2 pl-1.5">
        <Tools items={mainTools} />
      </div>
    </div>

    <div className="flex h-[26px] shrink-0 items-center gap-[5px] border-t border-[#a0a0a0] bg-[#f0f0f0] pl-2 font-['Liberation_Sans',sans-serif] shadow-[inset_0_1px_0_#fff]">
      {shortcuts.map((name) => (
        <button key={name} className="h-5 border border-r-2 border-b-2 border-white border-r-[#696969] border-b-[#696969] px-2 leading-4">{name}</button>
      ))}
    </div>

    <main className="relative flex min-h-0 flex-1 flex-col border-t border-l border-[#a0a0a0] bg-[#696969] pt-px pl-px">
      <section className="mr-0.5 flex min-h-0 flex-1 flex-col rounded-t-md border border-black bg-[#b9d1ea] pl-2 shadow-[inset_1px_1px_0_#fff,inset_-1px_-1px_0_#30c0e0]">
        <div className="-ml-2 flex h-[30px] shrink-0 items-center rounded-t-md border-t border-white bg-linear-to-b from-[#99b4d1] to-[#b9d1ea] pr-[10px] pl-[9px]">
          <svg viewBox="0 0 14 14" shapeRendering="crispEdges" aria-hidden="true" className="mt-1 h-3.5 w-3.5">
            <rect width="14" height="14" fill="#808080" />
            <path d="M1.5 0v14M0 12.5h14" stroke="#000" />
            <path d="M2 9L4 4L7 10L10 3L13 9" fill="none" stroke="#00e000" />
            <path d="M7.5 11V3" stroke="#f00" />
          </svg>
          <h2 className="mt-1 flex-1 pl-[5px]">Trace window</h2>
          <div className="flex gap-0.5 pt-1">
            <AeroButton name="minimize" />
            <AeroButton name="restore" />
            <AeroButton name="close" />
          </div>
        </div>

        <div className="mr-[7px] flex min-h-0 flex-1 flex-col">
          <div className="flex h-[30px] shrink-0 border-t border-[#a0a0a0] bg-white">
            <div className="flex items-center border-r border-[#a0a0a0] bg-[#f0f0f0] pr-1.5 pl-1.5">
              <Tools items={traceTools} />
            </div>
          </div>
          <div className="flex min-h-0 flex-1 border-t border-[#a0a0a0] bg-[#f0f0f0]">
            <div className="flex min-w-0 flex-1 flex-col">
              <div className="flex min-h-0 flex-1 border-t border-r-2 border-b border-l border-white border-t-[#696969] border-l-[#696969]">
                <Chart />
              </div>
              <div className="h-[6px] shrink-0 border-b-2 border-[#808080]" />
            </div>
            <div className="flex shrink-0 flex-col border-b border-[#a0a0a0]">
              <TraceList />
            </div>
          </div>
          <CursorBars />
          <div className="h-[9px] shrink-0 border-t-2 border-white" />
        </div>
      </section>

      <div className="absolute bottom-0 left-0.5 flex">
        <MinimizedWindow title="FFT..." />
        <MinimizedWindow title="Sw..." />
      </div>
    </main>

    <StatusBar />

    {/* mouse pointer */}
    <svg viewBox="0 0 12 18" className="pointer-events-none absolute top-1.5 left-[465px] h-[18px] w-3">
      <path d="M.5 .5V14.5L4 11.5L6.5 17L9 16L6.5 10.5H11Z" fill="#fff" stroke="#000" />
    </svg>
  </div>
);

export default App;
